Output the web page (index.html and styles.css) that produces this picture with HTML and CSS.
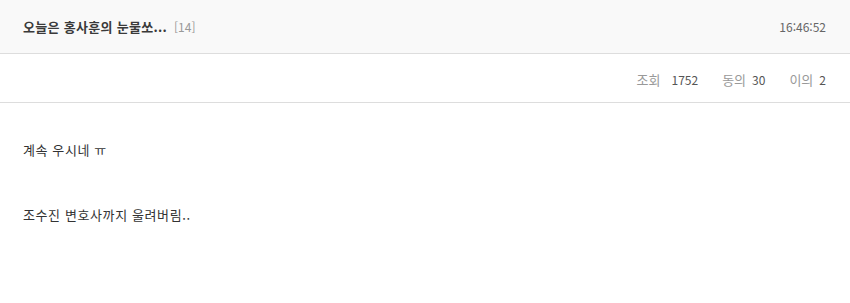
FILE: index.html
```html
<!DOCTYPE html>
<html lang="ko">
<head>
<meta charset="utf-8">
<link rel="stylesheet" href="styles.css">
</head>
<body>
<div class="post">
  <div class="head">
    <div class="title">오늘은 홍사훈의 눈물쏘... <span class="cnt">[14]</span></div>
    <div class="time">16:46:52</div>
  </div>
  <div class="stats">
    <span class="stat first"><span class="lbl">조회</span><span class="num">1752</span></span>
    <span class="stat"><span class="lbl">동의</span><span class="num">30</span></span>
    <span class="stat"><span class="lbl">이의</span><span class="num">2</span></span>
  </div>
  <div class="body">
    <p>계속 우시네 ㅠ</p>
    <p>조수진 변호사까지 울려버림..</p>
  </div>
</div>
</body>
</html>
```
FILE: styles.css
```css
html, body { margin: 0; padding: 0; background: #fff; }
body { font-family: "Noto Sans CJK KR", "Noto Sans", sans-serif; font-size: 13px; color: #333; }
.post { width: 850px; }
.head {
  height: 54px; box-sizing: border-box;
  background: #f9f9f9;
  border-bottom: 1px solid #ddd;
  display: flex; align-items: center; justify-content: space-between;
  padding: 0 24px 0 23px;
}
.title { font-weight: bold; font-size: 13px; color: #3a3a3a; letter-spacing: 0.3px; }
.cnt { font-weight: normal; color: #999; font-size: 12px; letter-spacing: 0; margin-left: 3px; }
.time { color: #666; font-size: 12px; }
.stats {
  height: 49px; box-sizing: border-box;
  border-bottom: 1px solid #ddd;
  display: flex; align-items: center; justify-content: flex-end;
  padding: 3px 24px 0 23px; gap: 24px;
}
.stat { display: flex; align-items: baseline; gap: 6px; }
.stat.first { gap: 11px; }
.lbl { color: #999; }
.num { color: #555; font-size: 12px; }
.body { padding: 36px 23px; }
.body p { margin: 0 0 44px; line-height: 21px; letter-spacing: 0.6px; }
```
